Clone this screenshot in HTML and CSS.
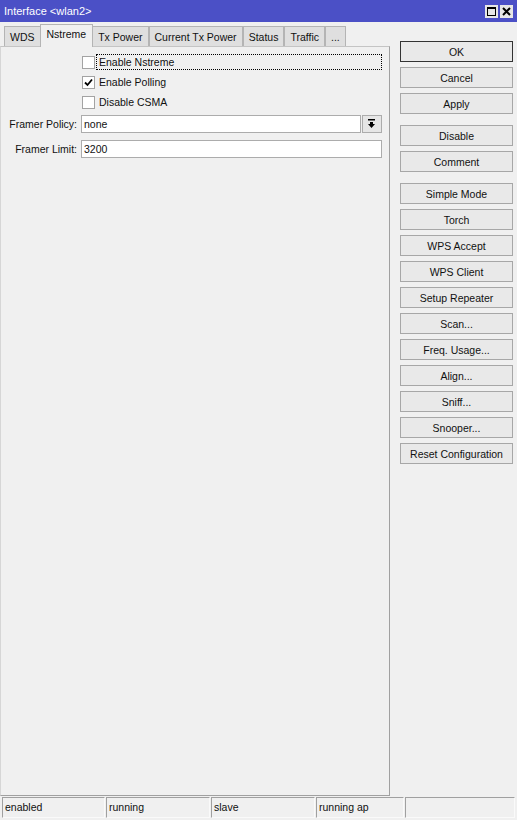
FILE: index.html
```html
<!DOCTYPE html>
<html lang="en">
<head>
    <meta charset="UTF-8">
    <meta name="viewport" content="width=device-width, initial-scale=1.0">
    <title>Interface &lt;wlan2&gt;</title>
    <link rel="stylesheet" href="styles.css">
</head>
<body>
    <div class="window">
        <div class="titlebar">
            <span class="title">Interface &lt;wlan2&gt;</span>
            <div class="title-btns">
                <span class="tbtn">
                    <svg width="11" height="11" viewBox="0 0 11 11"><rect x="1.5" y="1.5" width="8" height="8" fill="none" stroke="#000" stroke-width="1"/><rect x="1" y="1" width="9" height="2" fill="#000"/></svg>
                </span>
                <span class="tbtn">
                    <svg width="11" height="11" viewBox="0 0 11 11"><path d="M2 2 L9 9 M9 2 L2 9" stroke="#000" stroke-width="2"/></svg>
                </span>
            </div>
        </div>
        <div class="main">
            <div class="left">
                <div class="tabs">
                    <div class="tab">WDS</div>
                    <div class="tab active">Nstreme</div>
                    <div class="tab">Tx Power</div>
                    <div class="tab">Current Tx Power</div>
                    <div class="tab">Status</div>
                    <div class="tab">Traffic</div>
                    <div class="tab">...</div>
                </div>
                <div class="panel">
                    <div class="check">
                        <span class="box"></span>
                        <span class="check-label focus">Enable Nstreme</span>
                    </div>
                    <div class="check">
                        <span class="box">
                            <svg width="11" height="11" viewBox="0 0 11 11"><path d="M2 5.5 L4.5 8 L9 2.5" fill="none" stroke="#000" stroke-width="1.8"/></svg>
                        </span>
                        <span class="check-label">Enable Polling</span>
                    </div>
                    <div class="check">
                        <span class="box"></span>
                        <span class="check-label">Disable CSMA</span>
                    </div>
                    <div class="field first">
                        <span class="field-label">Framer Policy:</span>
                        <div class="input">none</div>
                        <div class="dd">
                            <svg width="18" height="16" viewBox="0 0 18 16"><rect x="5" y="3" width="7" height="1.5" fill="#000"/><rect x="7" y="6" width="3" height="2" fill="#000"/><polygon points="5,8 12,8 8.5,12" fill="#000"/></svg>
                        </div>
                    </div>
                    <div class="field">
                        <span class="field-label">Framer Limit:</span>
                        <div class="input wide">3200</div>
                    </div>
                </div>
            </div>
            <div class="side">
                <button class="btn default">OK</button>
                <button class="btn">Cancel</button>
                <button class="btn">Apply</button>
                <button class="btn group">Disable</button>
                <button class="btn">Comment</button>
                <button class="btn group">Simple Mode</button>
                <button class="btn">Torch</button>
                <button class="btn">WPS Accept</button>
                <button class="btn">WPS Client</button>
                <button class="btn">Setup Repeater</button>
                <button class="btn">Scan...</button>
                <button class="btn">Freq. Usage...</button>
                <button class="btn">Align...</button>
                <button class="btn">Sniff...</button>
                <button class="btn">Snooper...</button>
                <button class="btn">Reset Configuration</button>
            </div>
        </div>
        <div class="statusbar">
            <div class="cell c1">enabled</div>
            <div class="cell c2">running</div>
            <div class="cell c3">slave</div>
            <div class="cell c4">running ap</div>
            <div class="cell c5"></div>
        </div>
    </div>
</body>
</html>
```

FILE: styles.css
```css
body {
    margin: 0;
    background: #f0f0f0;
    font-family: "Liberation Sans", Arial, sans-serif;
    font-size: 10.5px;
    color: #111;
}
.window {
    width: 517px;
    height: 820px;
    display: flex;
    flex-direction: column;
}

/* title bar */
.titlebar {
    height: 22px;
    flex: none;
    background: #4b50c6;
    color: #fff;
    font-size: 11px;
    display: flex;
    align-items: center;
    padding: 0 4px 0 4px;
}
.title {
    flex: 1;
}
.title-btns {
    display: flex;
    gap: 2px;
}
.tbtn {
    width: 13px;
    height: 13px;
    background: #e6e6e6;
    display: flex;
    align-items: center;
    justify-content: center;
}

/* main area */
.main {
    flex: 1;
    display: flex;
}
.left {
    width: 390px;
    display: flex;
    flex-direction: column;
}
.tabs {
    height: 24px;
    flex: none;
    display: flex;
    align-items: flex-end;
    padding-left: 4px;
}
.tab {
    height: 20px;
    box-sizing: border-box;
    border: 1px solid #b4b4b4;
    border-bottom: none;
    background: #dfdfdf;
    padding: 0 5px;
    line-height: 20px;
}
.tab.active {
    height: 23px;
    background: #f0f0f0;
    margin: 0 -1px -1px -1px;
    padding: 0 6px;
    line-height: 18px;
    position: relative;
    z-index: 1;
}
.panel {
    flex: 1;
    box-sizing: border-box;
    border: 1px solid #a0a0a0;
    border-top-color: #c4c4c4;
    border-left-color: #d6d6d6;
    padding: 5px 7px 0 0;
}
.check {
    display: flex;
    align-items: center;
    height: 20px;
    padding-left: 81px;
}
.box {
    width: 13px;
    height: 13px;
    flex: none;
    box-sizing: border-box;
    border: 1px solid #a3a3a3;
    background: #fff;
    display: flex;
}
.check-label {
    flex: 1;
    margin-left: 1px;
    padding: 0 2px;
    line-height: 14px;
    border: 1px dotted transparent;
}
.check-label.focus {
    border-color: #000;
}
.field {
    display: flex;
    height: 18px;
    margin-top: 7px;
}
.field.first {
    margin-top: 3px;
}
.field-label {
    width: 80px;
    box-sizing: border-box;
    padding-right: 4px;
    text-align: right;
    line-height: 18px;
}
.input {
    width: 280px;
    height: 18px;
    box-sizing: border-box;
    border: 1px solid #acacac;
    background: #fff;
    padding-left: 2px;
    line-height: 16px;
}
.input.wide {
    width: 301px;
}
.dd {
    width: 20px;
    height: 18px;
    margin-left: 1px;
    box-sizing: border-box;
    border: 1px solid #acacac;
    background: #e6e6e6;
}
.dd svg {
    display: block;
}

/* button column */
.side {
    width: 113px;
    margin-left: 10px;
    padding-top: 19px;
    display: flex;
    flex-direction: column;
    gap: 5px;
}
.btn {
    height: 21px;
    box-sizing: border-box;
    border: 1px solid #a7a7a7;
    background: #e9e9e9;
    font-family: inherit;
    font-size: 10.5px;
    color: #111;
    padding: 0;
    text-align: center;
}
.btn.default {
    border-color: #333;
}
.btn.group {
    margin-top: 6px;
}

/* status bar */
.statusbar {
    height: 21px;
    flex: none;
    display: flex;
    gap: 1px;
    margin: 1px 0 2px;
    padding-left: 2px;
}
.cell {
    box-sizing: border-box;
    border: 1px solid;
    border-color: #a0a0a0 #fafafa #fafafa #a0a0a0;
    padding-left: 2px;
    line-height: 19px;
}
.c1 { width: 103px; }
.c2 { width: 104px; }
.c3 { width: 104px; }
.c4 { width: 88px; }
.c5 { width: 110px; }
```
